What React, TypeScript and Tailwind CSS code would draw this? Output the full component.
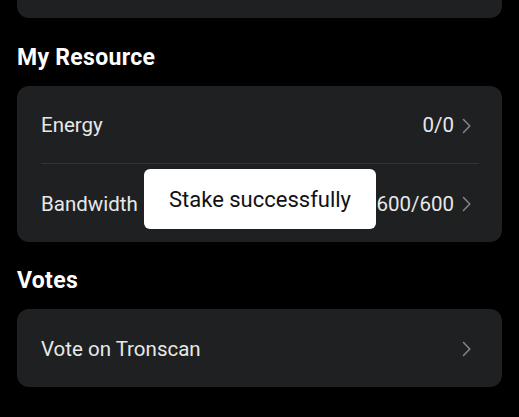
import React from "react";

function Chevron() {
  return (
    <svg width="18" height="18" viewBox="0 0 18 18" fill="none" className="shrink-0">
      <path d="M2.5 2.5 L8.8 9 L2.5 15.5" stroke="#85868a" strokeWidth="1.5" strokeLinecap="round" strokeLinejoin="round" />
    </svg>
  );
}

function Row({ label, value, border }: { label: string; value?: string; border?: boolean }) {
  return (
    <div className={`flex items-center h-[78px] pt-[2px] ${border ? "border-b border-[#333438]" : ""}`}>
      <span className="flex-1 text-[20.5px] text-[#e8e8e8]">{label}</span>
      {value && <span className="text-[20.5px] text-[#e8e8e8] mr-[7px]">{value}</span>}
      <Chevron />
    </div>
  );
}

export default function App() {
  return (
    <div
      className="relative w-[519px] h-[417px] bg-black px-[17px] overflow-hidden"
      style={{ fontFamily: "Roboto, 'Noto Sans', sans-serif" }}
    >
      <div className="h-[18px] bg-[#1f2022] rounded-b-[12px]" />

      <h2 className="mt-[26px] mb-[14px] text-[23px] leading-[28px] font-bold tracking-[0.3px] text-white">My Resource</h2>
      <div className="bg-[#1f2022] rounded-[12px] pl-[24px] pr-[23px]">
        <Row label="Energy" value="0/0" border />
        <Row label="Bandwidth" value="600/600" />
      </div>

      <h2 className="mt-[25px] mb-[14px] text-[23px] leading-[28px] font-bold tracking-[0.3px] text-white">Votes</h2>
      <div className="bg-[#1f2022] rounded-[12px] pl-[24px] pr-[23px]">
        <Row label="Vote on Tronscan" />
      </div>

      <div className="absolute left-[144px] top-[169px] w-[232px] h-[60px] bg-white rounded-[6px] flex items-center justify-center pt-[1px]">
        <span className="text-[22px] text-[#111]">Stake successfully</span>
      </div>
    </div>
  );
}
